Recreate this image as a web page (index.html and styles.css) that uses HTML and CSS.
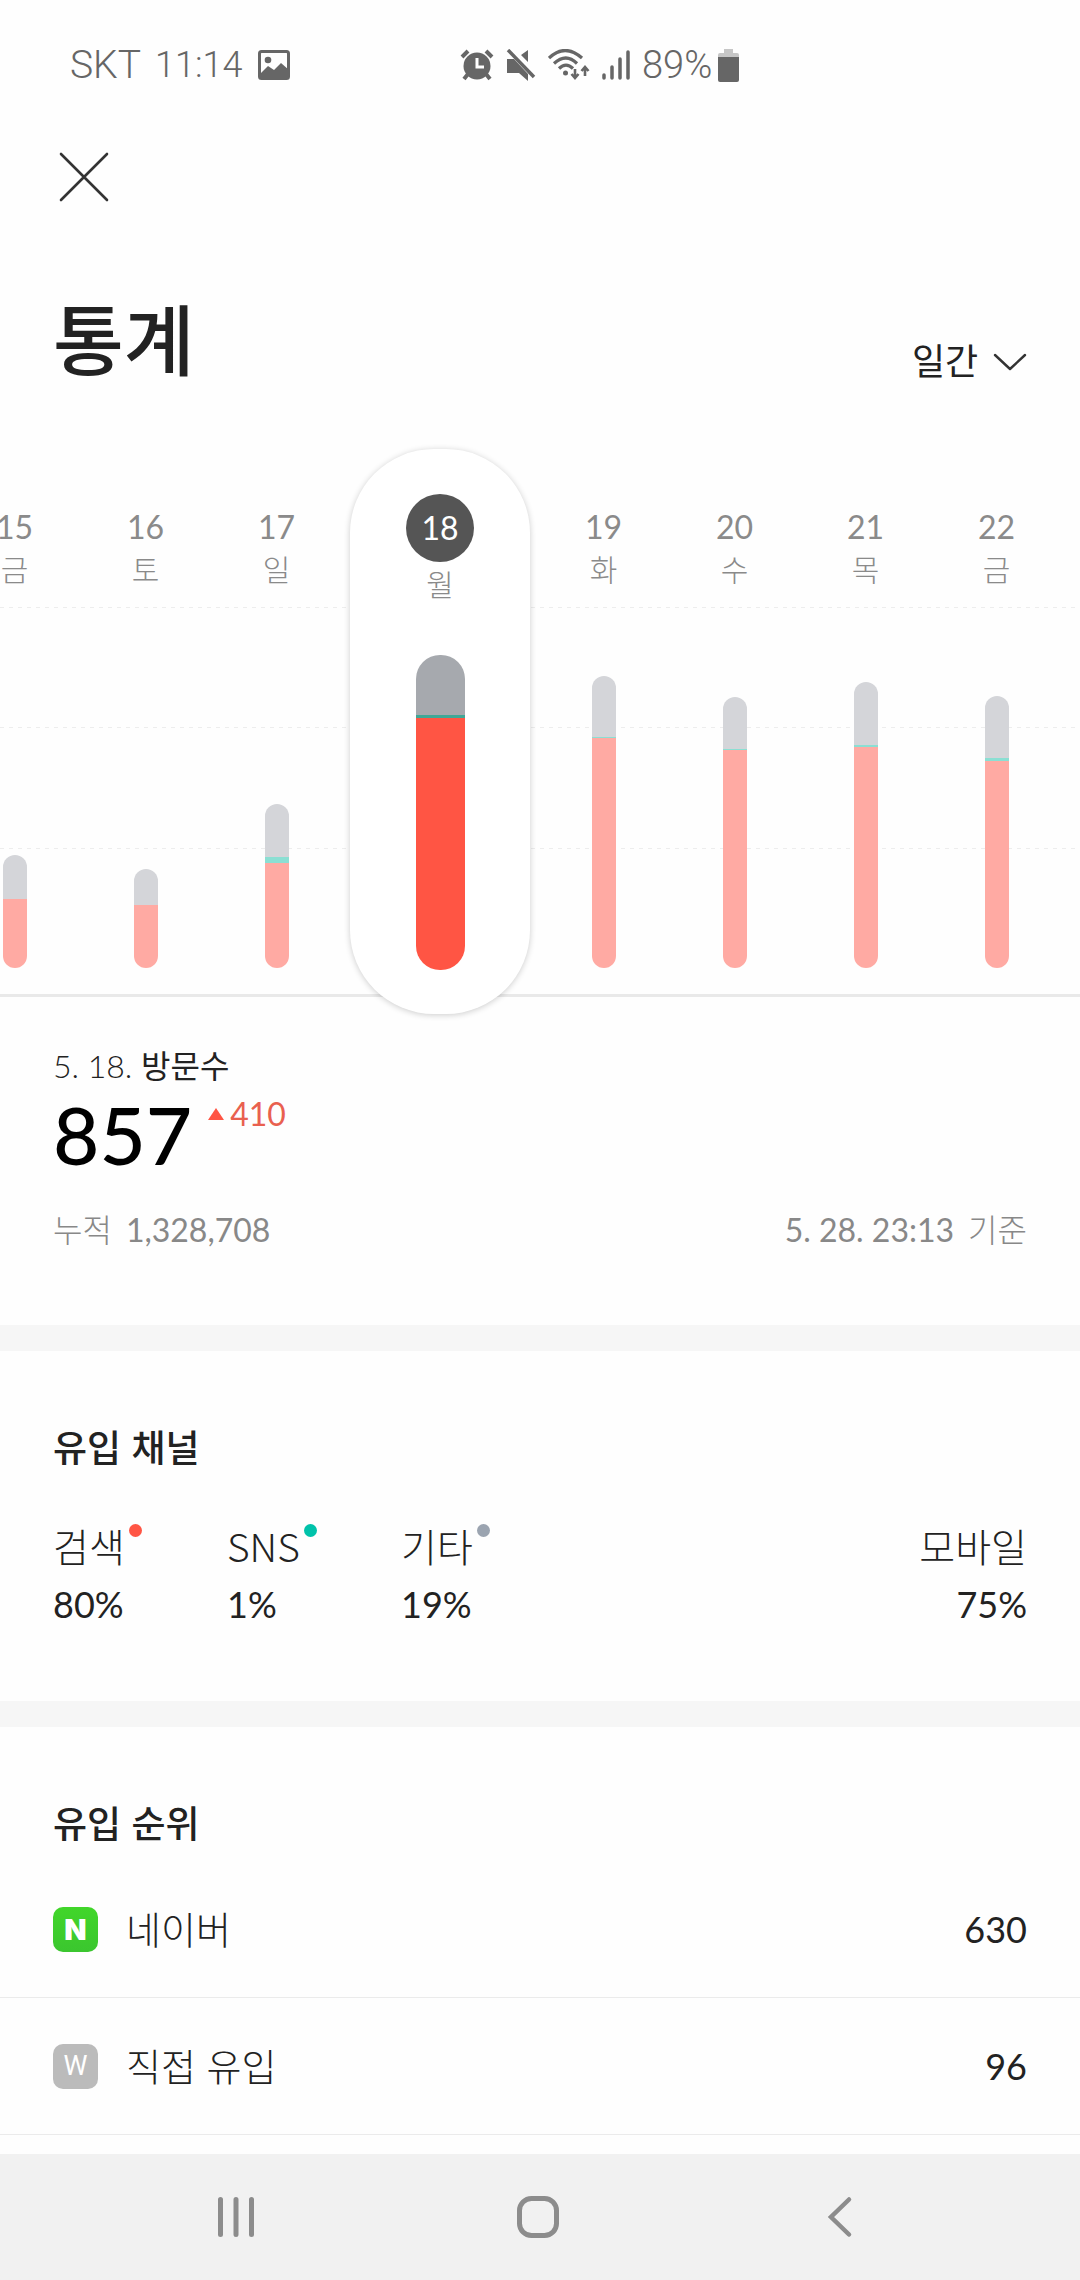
FILE: index.html
```html
<!DOCTYPE html>
<html lang="ko">
<head>
    <meta charset="UTF-8">
    <meta name="viewport" content="width=device-width, initial-scale=1">
    <title>통계</title>
    <link rel="stylesheet" href="styles.css">
</head>
<body>
    <div class="status-bar">
        <div class="status-left">
            <span class="carrier">SKT</span>
            <span class="clock">11:14</span>
            <svg class="picture-icon" width="32" height="30" viewBox="0 0 32 30">
                <rect x="1.5" y="1.5" width="29" height="27" rx="2" fill="none" stroke="#666" stroke-width="3"/>
                <circle cx="10" cy="10" r="3.3" fill="#666"/>
                <path d="M2 24l8-8 6 4 7-7 8 7v8H2z" fill="#666"/>
            </svg>
        </div>
        <div class="status-right">
            <svg width="34" height="32" viewBox="0 0 34 32">
                <path d="M2 8l6-6M32 8l-6-6M8 25l-4 5M26 25l4 5" stroke="#666" stroke-width="4" fill="none"/>
                <circle cx="17" cy="17" r="13.5" fill="#666"/>
                <path d="M17 9v9h7" stroke="#fff" stroke-width="3" fill="none"/>
            </svg>
            <svg width="30" height="32" viewBox="0 0 30 32">
                <path d="M1 10h7l14 15v7l-9-8H1zM22 1v12l-7-7z" fill="#666"/>
                <path d="M4 0l26 28" stroke="#fff" stroke-width="3"/>
                <path d="M2 1l26 27" stroke="#666" stroke-width="3.5"/>
            </svg>
            <svg width="42" height="32" viewBox="0 0 42 32">
                <g fill="none" stroke="#666" stroke-width="3.2">
                    <path d="M1 9q16-15 33 0"/>
                    <path d="M6 14.500q12-11 23 0"/>
                    <path d="M11 19.500q7-7 14 0"/>
                    <path d="M27 20v9M23.500 25l3.500 4 3.500-4M37 27v-9M33.500 22l3.500-4 3.500 4" stroke-width="2.600"/>
                </g>
                <circle cx="17.500" cy="24" r="2.500" fill="#666"/>
            </svg>
            <svg width="28" height="32" viewBox="0 0 28 32">
                <path d="M2 26v3M10 18v11M18 10v19M26 3v26" stroke="#666" stroke-width="3.500" stroke-linecap="round"/>
            </svg>
            <span class="battery-text">89%</span>
            <svg width="21" height="33" viewBox="0 0 21 33">
                <path d="M6 0h9v4h4q2 0 2 2v3H0V6q0-2 2-2h4z" fill="#c6c6c6"/>
                <path d="M0 8h21v23q0 2-2 2H2q-2 0-2-2z" fill="#666"/>
            </svg>
        </div>
    </div>

    <header class="header">
        <button class="close" aria-label="닫기">
            <svg width="50" height="50" viewBox="0 0 50 50">
                <path d="M2 2l46 46M48 2L2 48" stroke="#333" stroke-width="2.600" stroke-linecap="round"/>
            </svg>
        </button>
        <div class="title-row">
            <h1>통계</h1>
            <div class="period">
                <select id="period" aria-label="기간">
                    <option>일간</option>
                    <option>주간</option>
                    <option>월간</option>
                </select>
                <svg width="34" height="18" viewBox="0 0 34 18">
                    <path d="M2 2l15 14L32 2" fill="none" stroke="#333" stroke-width="2.400" stroke-linecap="round" stroke-linejoin="round"/>
                </svg>
            </div>
        </div>
    </header>

    <main>
        <section class="chart">
            <div class="lines">
                <div></div>
                <div></div>
                <div></div>
            </div>
            <div class="days">
                <button class="day">
                    <span class="num">15</span>
                    <span class="weekday">금</span>
                    <span class="bar"><i class="etc" style="height: 44px"></i><i class="search" style="height: 69px"></i></span>
                </button>
                <button class="day">
                    <span class="num">16</span>
                    <span class="weekday">토</span>
                    <span class="bar"><i class="etc" style="height: 36px"></i><i class="search" style="height: 63px"></i></span>
                </button>
                <button class="day">
                    <span class="num">17</span>
                    <span class="weekday">일</span>
                    <span class="bar"><i class="etc" style="height: 53px"></i><i class="sns" style="height: 6px"></i><i class="search" style="height: 105px"></i></span>
                </button>
                <button class="day selected">
                    <span class="num">18</span>
                    <span class="weekday">월</span>
                    <span class="bar"><i class="etc" style="height: 60px"></i><i class="sns" style="height: 3px"></i><i class="search" style="height: 252px"></i></span>
                </button>
                <button class="day">
                    <span class="num">19</span>
                    <span class="weekday">화</span>
                    <span class="bar"><i class="etc" style="height: 61px"></i><i class="sns" style="height: 1px"></i><i class="search" style="height: 230px"></i></span>
                </button>
                <button class="day">
                    <span class="num">20</span>
                    <span class="weekday">수</span>
                    <span class="bar"><i class="etc" style="height: 52px"></i><i class="sns" style="height: 1px"></i><i class="search" style="height: 218px"></i></span>
                </button>
                <button class="day">
                    <span class="num">21</span>
                    <span class="weekday">목</span>
                    <span class="bar"><i class="etc" style="height: 63px"></i><i class="sns" style="height: 2px"></i><i class="search" style="height: 221px"></i></span>
                </button>
                <button class="day">
                    <span class="num">22</span>
                    <span class="weekday">금</span>
                    <span class="bar"><i class="etc" style="height: 62px"></i><i class="sns" style="height: 3px"></i><i class="search" style="height: 207px"></i></span>
                </button>
            </div>
        </section>

        <section class="visits">
            <p class="date">5. 18. <b>방문수</b></p>
            <div class="count-row">
                <strong class="count">857</strong>
                <span class="diff">
                    <svg width="16" height="12" viewBox="0 0 16 12"><path d="M8 0l8 12H0z" fill="#ff5544"/></svg>
                    410
                </span>
            </div>
            <div class="total-row">
                <span class="total"><span>누적</span><span class="figure">1,328,708</span></span>
                <span class="total"><span class="figure">5. 28. 23:13</span><span>기준</span></span>
            </div>
        </section>

        <section class="channels">
            <h2>유입 채널</h2>
            <dl>
                <div>
                    <dt>검색<i class="dot red"></i></dt>
                    <dd>80%</dd>
                </div>
                <div>
                    <dt>SNS<i class="dot green"></i></dt>
                    <dd>1%</dd>
                </div>
                <div>
                    <dt>기타<i class="dot gray"></i></dt>
                    <dd>19%</dd>
                </div>
                <div class="mobile">
                    <dt>모바일</dt>
                    <dd>75%</dd>
                </div>
            </dl>
        </section>

        <section class="ranking">
            <h2>유입 순위</h2>
            <ol>
                <li>
                    <span class="site naver">N</span>
                    <span class="name">네이버</span>
                    <span class="value">630</span>
                </li>
                <li>
                    <span class="site direct">W</span>
                    <span class="name">직접 유입</span>
                    <span class="value">96</span>
                </li>
            </ol>
        </section>
    </main>

    <nav class="nav-bar">
        <button aria-label="최근 앱">
            <svg width="44" height="44" viewBox="0 0 44 44">
                <path d="M6.500 4.500v35M22 4.500v35M37.500 4.500v35" stroke="#8c8c8c" stroke-width="5" stroke-linecap="round"/>
            </svg>
        </button>
        <button aria-label="홈">
            <svg width="44" height="44" viewBox="0 0 44 44">
                <rect x="3.500" y="3.500" width="37" height="37" rx="12" fill="none" stroke="#8c8c8c" stroke-width="5"/>
            </svg>
        </button>
        <button aria-label="뒤로">
            <svg width="44" height="44" viewBox="0 0 44 44">
                <path d="M31 4.500L13 22l18 17.500" fill="none" stroke="#8c8c8c" stroke-width="4.500" stroke-linecap="round"/>
            </svg>
        </button>
    </nav>
</body>
</html>
```
FILE: styles.css
```css
* { box-sizing: border-box; }
body { margin: 0; min-height: 100vh; display: flex; flex-direction: column; background: #fefefe; color: #222; font-family: Lato, "Noto Sans CJK KR", sans-serif; font-weight: 300; }
h1, h2, p, dl, dd, ol { margin: 0; padding: 0; }
svg { display: block; flex: none; }
button { padding: 0; border: none; background: none; color: inherit; font: inherit; cursor: pointer; }
main { flex: 1; }

/* status bar */
.status-bar { display: flex; align-items: center; height: 130px; padding: 0 70px; color: #666; font-family: Roboto, sans-serif; line-height: 40px; }
.status-left { display: flex; align-items: center; flex: 0 0 390px; }
.carrier { font-size: 39px; }
.clock { margin: 0 16px 0 14px; font-size: 36px; }
.status-right { display: flex; align-items: center; gap: 12px; }
.battery-text { font-size: 38px; }
.status-right .battery-text + svg { margin-left: -6px; }

/* header */
.header { padding: 22px 53px 0; }
.close { display: block; padding: 0 6px; }
.title-row { display: flex; justify-content: space-between; align-items: flex-end; margin-top: 91px; }
h1 { font-size: 77px; line-height: 88px; font-weight: 500; font-family: "Noto Sans CJK KR", sans-serif; }
.period { display: flex; align-items: center; gap: 14px; }
.period select { appearance: none; border: none; background: none; padding: 0 0 2px; color: #222; font-family: "Noto Sans CJK KR", sans-serif; font-size: 36px; font-weight: 400; line-height: 40px; }
.period svg { margin-top: 4px; }

/* daily chart: guide lines and columns share one grid cell */
.chart { display: grid; padding: 68px 0 16px; overflow: hidden; }
.lines, .days { grid-area: 1 / 1; min-width: 0; }
.lines { display: grid; grid-template-rows: 120px 121px 149px; align-content: start; padding-top: 158px; }
.lines div { background: repeating-linear-gradient(to right, #ededed 0, #ededed 4px, transparent 4px, transparent 9px) top / 100% 1px no-repeat; }
.lines div:last-child { border-bottom: 3px solid #e9e9e9; }
.days { display: flex; height: 565px; margin-left: -51px; }
.day { display: flex; flex: none; flex-direction: column; align-items: center; width: 131px; padding: 48px 0 46px; color: #8a8a8a; }
.num { font-size: 32px; font-weight: 400; line-height: 60px; }
.weekday { font-family: "Noto Sans CJK KR", sans-serif; font-size: 30px; line-height: 22px; }
.bar { display: flex; flex-direction: column; width: 24px; margin-top: auto; border-radius: 12px; overflow: hidden; }
.etc { background: #d4d5d9; }
.sns { background: #8bdfd3; }
.search { background: #ffaaa3; }
.selected { width: 180px; margin: 0 8px; padding: 45px 0 44px; border-radius: 84px; background: #fff; box-shadow: 0 1px 6px rgba(0,0,0,0.2); }
.selected .num { width: 68px; border-radius: 50%; background: #555; color: #fff; line-height: 68px; }
.selected .weekday { margin-top: 10px; }
.selected .bar { width: 49px; border-radius: 24px; }
.selected .etc { background: #a6a9ae; }
.selected .sns { background: #3fa796; }
.selected .search { background: #ff5544; }

/* visits */
.visits { padding: 16px 53px 75px; border-bottom: 26px solid #f6f6f6; font-size: 32px; line-height: 40px; }
.date b { font-weight: 400; }
.count-row { display: flex; align-items: flex-start; gap: 16px; margin-top: 8px; }
.count { color: #000; font-size: 80px; line-height: 80px; font-weight: 500; }
.diff { display: flex; align-items: center; gap: 6px; color: #e9604f; font-weight: 400; }
.total-row { display: flex; justify-content: space-between; margin-top: 36px; color: #888; }
.total { display: flex; gap: 14px; }
.figure { font-weight: 400; }

/* channels and ranking */
h2 { padding: 0 53px; font-family: "Noto Sans CJK KR", sans-serif; font-size: 37px; line-height: 48px; font-weight: 500; }
.channels { padding: 71px 0 68px; border-bottom: 26px solid #f6f6f6; }
.channels dl { display: flex; margin-top: 46px; padding: 0 53px; line-height: 58px; }
.channels dl div { flex: 0 0 174px; }
.channels dl .mobile { flex: 1; text-align: right; }
dt { display: flex; font-family: "Noto Sans CJK KR", sans-serif; font-size: 39px; }
.mobile dt { justify-content: flex-end; }
dd { padding-top: 1px; font-size: 36px; font-weight: 400; }
.dot { width: 13px; height: 13px; margin: 8px 0 0 4px; border-radius: 50%; }
.red { background: #ff5544; }
.green { background: #00c2aa; }
.gray { background: #9ba4b0; }
.ranking { padding-top: 71px; }
.ranking ol { margin-top: 15px; list-style: none; }
.ranking li { display: flex; align-items: center; height: 137px; padding: 0 53px; border-bottom: 1px solid #ebebeb; }
.site { width: 45px; height: 45px; border-radius: 10px; color: #fff; line-height: 45px; text-align: center; }
.naver { background: linear-gradient(#41d62a, #3bc62f); font-family: Inter, sans-serif; font-size: 29px; font-weight: 900; }
.direct { background: #bbb; font-family: Roboto, sans-serif; font-size: 27px; font-weight: 400; }
.name { flex: 1; margin-left: 28px; padding-bottom: 4px; font-family: "Noto Sans CJK KR", sans-serif; font-size: 38px; }
.value { font-size: 36px; font-weight: 400; }

/* system navigation */
.nav-bar { display: flex; justify-content: space-around; align-items: center; height: 126px; padding: 0 89px 0 85px; background: #f1f1f1; }
```
